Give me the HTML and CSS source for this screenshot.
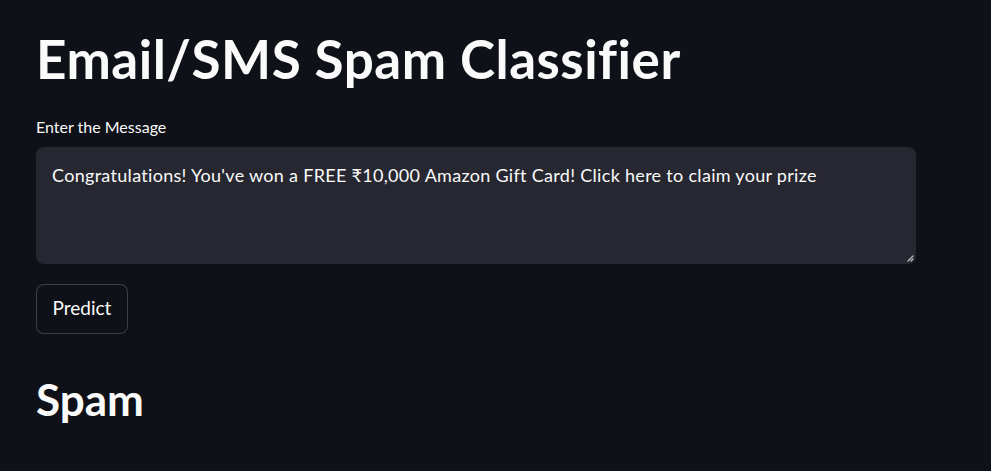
FILE: index.html
```html
<!DOCTYPE html>
<html lang="en">
<head>
<meta charset="utf-8">
<title>Email/SMS Spam Classifier</title>
<link rel="stylesheet" href="styles.css">
</head>
<body>
<main class="app">
  <h1 class="title">Email/SMS Spam Classifier</h1>
  <div class="field">
    <label class="label">Enter the Message</label>
    <div class="textarea">
      <span class="value">Congratulations! You've won a FREE ₹10,000 Amazon Gift Card! Click here to claim your prize</span>
      <svg class="grip" width="8" height="8" viewBox="0 0 8 8"><path d="M7 2 L2 7 M7 5 L5 7" stroke="#b8b8bd" stroke-width="1.4" stroke-linecap="round"/></svg>
    </div>
  </div>
  <button class="btn">Predict</button>
  <h2 class="result">Spam</h2>
</main>
</body>
</html>
```
FILE: styles.css
```css
html, body {
  margin: 0;
  padding: 0;
  background: #0e1117;
  color: #fafafa;
  font-family: Lato, "Noto Sans", sans-serif;
}
.app {
  width: 880px;
  padding: 24px 0 0 36px;
  display: flex;
  flex-direction: column;
  align-items: flex-start;
}
.title {
  margin: 0;
  font-size: 53px;
  font-weight: 700;
  line-height: 70px;
  letter-spacing: 0.5px;
}
.field {
  width: 880px;
  margin-top: 22px;
  display: flex;
  flex-direction: column;
}
.label {
  font-size: 16px;
  line-height: 22px;
  margin-bottom: 9px;
}
.textarea {
  position: relative;
  box-sizing: border-box;
  height: 117px;
  background: #262730;
  border-radius: 8px;
  padding: 15px 16px;
  font-size: 18px;
  line-height: 26px;
  letter-spacing: 0.3px;
}
.grip {
  position: absolute;
  right: 2px;
  bottom: 2px;
}
.btn {
  margin-top: 20px;
  height: 50px;
  width: 92px;
  padding: 0 0 3px;
  background: #0e1117;
  color: #fafafa;
  border: 1px solid rgba(250, 250, 250, 0.2);
  border-radius: 8px;
  font-family: inherit;
  font-size: 19px;
}
.result {
  margin: 36px 0 0;
  font-size: 44px;
  font-weight: 700;
  line-height: 58px;
}
```
